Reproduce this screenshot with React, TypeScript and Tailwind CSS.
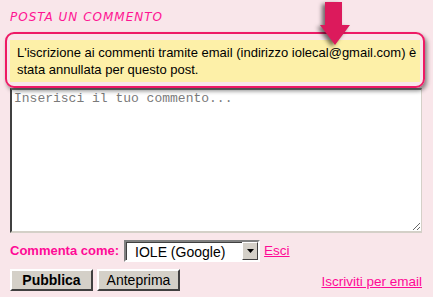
import React from 'react';

function Arrow() {
    return (
        <svg
            className="absolute z-20 left-[316px] top-0 w-[40px] h-[50px] drop-shadow-[-3px_2px_2px_rgba(0,0,0,0.55)]"
            viewBox="0 0 40 50"
        >
            <polygon points="9,2 26,2 26,25 34,25 19,45 4,25 9,25" fill="#dc1a5c" />
        </svg>
    );
}

function App() {
    return (
        <div className="relative w-[433px] h-[297px] overflow-hidden bg-[#f9e6ea] font-['Liberation_Sans',Arial,sans-serif] text-[13px] text-black">
            <Arrow />
            <div className="pl-[10px] pt-[10px] h-[32px] font-['DejaVu_Sans',Verdana,sans-serif] text-[12px] italic tracking-[1px] text-[#ff1493] leading-[14px]">
                POSTA UN COMMENTO
            </div>

            <div className="relative z-10 mx-[5px] w-[420px] h-[56px] rounded-[9px] border-2 border-[#ee1a66] px-[3px] pt-[6px] pb-[4px] shadow-[2px_3px_4px_rgba(0,0,0,0.45)]">
                <div className="h-[42px] bg-[#fdf0a8] pl-[7px] pt-[4px] leading-[17px]">
                    L'iscrizione ai commenti tramite email (indirizzo iolecal@gmail.com) è
                    <br />
                    stata annullata per questo post.
                </div>
            </div>

            <textarea
                className="block mx-[10px] w-[412px] h-[145px] resize bg-white border-t-2 border-l-2 border-r border-b-2 border-t-[#808080] border-l-[#404040] border-r-[#d4d0c8] border-b-[#d4d0c8] px-[2px] pt-[1px] font-['Liberation_Mono','Courier_New',monospace] text-[13px] leading-[15px] placeholder:text-[#7a7a7a] outline-none"
                placeholder="Inserisci il tuo commento..."
            />

            <div className="flex items-center pl-[10px] mt-[7px] h-[22px]">
                <span className="font-bold text-[13px] text-[#ff0a96] mr-[5px]">Commenta come:</span>
                <div className="flex w-[136px] h-[22px] border-2 border-t-[#808080] border-l-[#808080] border-r-white border-b-white bg-white">
                    <div className="flex-1 pl-[8px] leading-[18px] text-[14px] border-t border-l border-[#404040]">IOLE (Google)</div>
                    <div className="w-[16px] h-[18px] bg-[#d4d0c8] border border-t-white border-l-white border-r-[#404040] border-b-[#404040] flex items-center justify-center">
                        <svg width="7" height="4" viewBox="0 0 7 4">
                            <polygon points="0,0 7,0 3.5,4" fill="#000" />
                        </svg>
                    </div>
                </div>
                <a className="ml-[4px] text-[13.5px] text-[#ff0a96] underline">Esci</a>
            </div>

            <div className="flex items-center pl-[10px] pr-[11px] mt-[6px]">
                <button className="w-[83px] h-[22px] bg-[#d4d0c8] border-2 border-t-white border-l-white border-r-[#404040] border-b-[#404040] font-bold text-[14px] leading-[16px]">
                    Pubblica
                </button>
                <button className="ml-[4px] w-[83px] h-[22px] bg-[#d4d0c8] border-2 border-t-white border-l-white border-r-[#404040] border-b-[#404040] text-[14px] leading-[16px]">
                    Anteprima
                </button>
                <a className="ml-auto mt-[4px] text-[13.5px] text-[#ff0a96] underline">Iscriviti per email</a>
            </div>
        </div>
    );
}

export default App;
